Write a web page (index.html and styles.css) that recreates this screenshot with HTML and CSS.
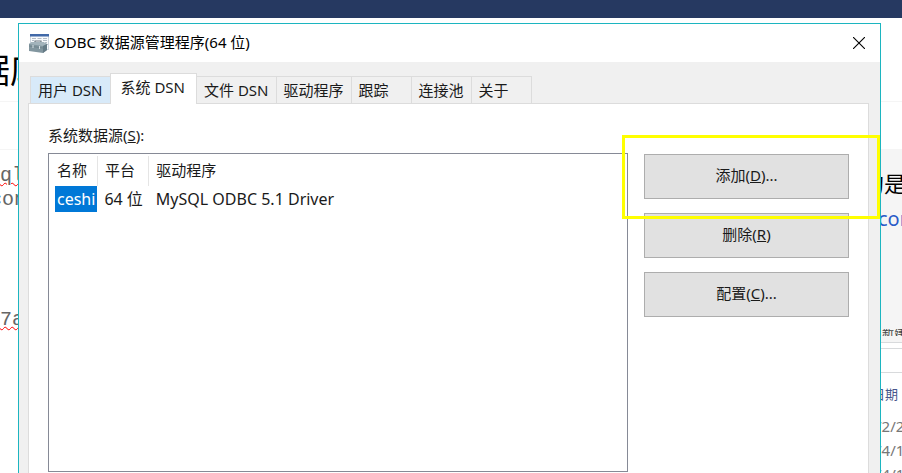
FILE: index.html
```html
<!DOCTYPE html>
<html lang="zh-CN">
<head>
    <meta charset="UTF-8">
    <meta name="viewport" content="width=device-width, initial-scale=1.0">
    <title>ODBC 数据源管理程序(64 位)</title>
    <link rel="stylesheet" href="styles.css">
</head>
<body>
    <div class="desktop">
        <div class="top-bar"></div>
        <div class="page">
            <div class="page-left">
                <h1 class="page-title">据库</h1>
                <div class="code">
                    <p class="typo">ql</p>
                    <p class="code-cut"><span class="keyword">c</span>on</p>
                    <p class="typo code-last">7a</p>
                </div>
            </div>
            <div class="page-right">
                <div class="page-head"></div>
                <div class="card">
                    <p class="card-title">的是</p>
                    <a class="card-link" href="#">com</a>
                    <p class="card-note">新建</p>
                </div>
                <div class="divider"></div>
                <div class="dates">
                    <p class="dates-head">日期</p>
                    <p>/2/2</p>
                    <p>/4/1</p>
                    <p>/4/1</p>
                </div>
            </div>
        </div>

        <div class="dialog" role="dialog" aria-labelledby="dialogTitle">
            <div class="title-bar">
                <svg class="app-icon" viewBox="0 0 20 20" aria-hidden="true">
                    <rect x="1.5" y="1.5" width="18" height="15" fill="#f8fafc" stroke="#ccd5de"/>
                    <rect x="1" y="1" width="19" height="2.5" fill="#4169a8"/>
                    <path d="M3 5.5h4M8.5 5.5h4M14 5.500h4M3 7.5h2M14 7.5h4M16 9.5h2M18 11.5h1" stroke="#b3bcc6"/>
                    <path d="M6 10V8h6v2" fill="none" stroke="#6b7780" stroke-width="1.2"/>
                    <path d="M0 11l3-2h11l4 2v6l-4 3-14-2z" fill="#82969f"/>
                    <path d="M0 11l3-2h11l4 2-4 2z" fill="#a3b4bc"/>
                    <path d="M14 13l4-2v6l-4 3z" fill="#657b86"/>
                    <path d="M0 13l14 2" stroke="#6c808a" stroke-width=".8"/>
                    <path d="M4 12v3M10.5 13v3" stroke="#d5dfe4"/>
                </svg>
                <span id="dialogTitle">ODBC 数据源管理程序(64 位)</span>
                <button type="button" class="close-btn" aria-label="关闭">
                    <svg viewBox="0 0 12 12"><path d="M0 0l12 12M12 0L0 12" stroke="#000" stroke-width="1.1"/></svg>
                </button>
            </div>

            <div class="dialog-body">
                <div class="tabs" role="tablist">
                    <button type="button" class="tab hover" role="tab">用户 DSN</button>
                    <button type="button" class="tab active" role="tab" aria-selected="true">系统 DSN</button>
                    <button type="button" class="tab" role="tab">文件 DSN</button>
                    <button type="button" class="tab" role="tab">驱动程序</button>
                    <button type="button" class="tab short" role="tab">跟踪</button>
                    <button type="button" class="tab short" role="tab">连接池</button>
                    <button type="button" class="tab short" role="tab">关于</button>
                </div>

                <div class="panel" role="tabpanel">
                    <div class="list-label" id="listLabel">系统数据源(<u>S</u>):</div>
                    <div class="panel-row">
                        <div class="list">
                            <table aria-labelledby="listLabel">
                                <thead>
                                    <tr><th>名称</th><th>平台</th><th>驱动程序</th></tr>
                                </thead>
                                <tbody>
                                    <tr><td class="selected">ceshi</td><td>64 位</td><td>MySQL ODBC 5.1 Driver</td></tr>
                                </tbody>
                            </table>
                        </div>
                        <div class="actions">
                            <button type="button" class="btn">添加(<u>D</u>)...</button>
                            <button type="button" class="btn">删除(<u>R</u>)</button>
                            <button type="button" class="btn">配置(<u>C</u>)...</button>
                            <div class="highlight"></div>
                        </div>
                    </div>
                </div>
            </div>
        </div>
    </div>
</body>
</html>
```

FILE: styles.css
```css
* {
    box-sizing: border-box;
}
body {
    margin: 0;
    font-family: "Noto Sans", "Noto Sans CJK SC", sans-serif;
    font-size: 15px;
    line-height: 22px;
    color: #1a1a1a;
    background-color: #fff;
}
p, h1 {
    margin: 0;
}
button {
    font: inherit;
    color: inherit;
}
.desktop {
    position: relative;
    height: 100vh;
    overflow: hidden;
}
.top-bar {
    height: 18px;
    background-color: #263961;
}

/* 后面的网页 */
.page {
    display: flex;
    justify-content: space-between;
    white-space: nowrap;
}
.page-left {
    width: 40px;
    overflow: hidden;
}
.page-title {
    height: 84px;
    padding-top: 32px;
    border-bottom: 1px solid #f5f5f5;
    font-size: 34px;
    font-weight: normal;
    line-height: 40px;
    text-indent: -24px;
    color: #000;
}
.code {
    margin-top: 47px;
    padding-top: 14px;
    border-top: 1px solid #f5f5f5;
    font-family: "Liberation Mono", monospace;
    font-size: 20px;
    line-height: 24px;
    color: #666;
}
.code-cut {
    text-indent: -10px;
}
.code-last {
    margin-top: 96px;
}
.typo {
    text-decoration: underline wavy #f00 1px;
}
.keyword {
    color: #2b50c8;
}
.page-right {
    width: 40px;
    overflow: hidden;
}
.page-head {
    height: 84px;
    border-bottom: 1px solid #f5f5f5;
}
.card {
    height: 194px;
    margin-top: 47px;
    padding-top: 18px;
    border-bottom: 1px solid #d8dadc;
    background-color: #f5f5f5;
}
.card-title {
    font-size: 22px;
    line-height: 32px;
    color: #000;
}
.card-link {
    display: block;
    padding-left: 16px;
    font-size: 20px;
    line-height: 40px;
    color: #2a5bc8;
    text-decoration: none;
}
.card-note {
    height: 7px;
    margin-top: 90px;
    padding-left: 20px;
    overflow: hidden;
    font-size: 12px;
    line-height: 7px;
    color: #444;
}
.divider {
    height: 25px;
    margin-top: 5px;
    border-top: 1px solid #d8dadc;
    border-bottom: 1px solid #d8dadc;
}
.dates {
    padding: 9px 0 0 14px;
    font-size: 15px;
    line-height: 24px;
    color: #777;
}
.dates-head {
    margin-bottom: 8px;
    font-size: 13px;
    text-indent: -4px;
    color: #47568c;
}

/* 对话框 */
.dialog {
    position: absolute;
    top: 23px;
    left: 18px;
    right: 21px;
    border: 1px solid #1cb5c0;
    background-color: #f0f0f0;
}
.title-bar {
    display: flex;
    align-items: center;
    gap: 5px;
    height: 38px;
    padding: 0 15px 0 10px;
    background-color: #fff;
    color: #000;
}
.title-bar span {
    padding-bottom: 2px;
}
.app-icon {
    width: 20px;
    height: 20px;
}
.close-btn {
    display: flex;
    margin-left: auto;
    padding: 0;
    border: none;
    background: none;
}
.close-btn svg {
    width: 12px;
    height: 12px;
}
.dialog-body {
    padding: 11px 11px 40px 9px;
}
.tabs {
    display: flex;
    align-items: flex-end;
    padding-left: 2px;
}
.tab {
    height: 27px;
    margin-right: -1px;
    padding: 0 7px;
    border: 1px solid #dcdcdc;
    border-bottom: none;
    background-color: #f0f0f0;
    white-space: nowrap;
}
.tab.hover {
    background-color: #d8eaf9;
}
.tab.active {
    position: relative;
    z-index: 1;
    height: 31px;
    margin-bottom: -1px;
    padding: 0 11px 4px 10px;
    background-color: #fff;
}
.tab.short {
    width: 61px;
    text-align: left;
}
.panel {
    padding: 20px 19px;
    border: 1px solid #dcdcdc;
    background-color: #fff;
}
.list-label {
    margin-bottom: 7px;
}
.panel-row {
    display: flex;
    gap: 16px;
}
.list {
    flex: 1;
    min-height: 319px;
    padding: 2px 6px;
    border: 1px solid #868a96;
}
table {
    border-collapse: collapse;
}
th, td {
    padding: 0 6px 0 7px;
    text-align: left;
    font-weight: normal;
    white-space: nowrap;
}
th {
    height: 30px;
    padding-bottom: 2px;
    border-right: 1px solid #e5e5e5;
}
th:first-child {
    padding-left: 2px;
}
th:last-child {
    border-right: none;
}
td {
    height: 26px;
    font-size: 16px;
}
.selected {
    padding: 0 2px;
    background-color: #0078d7;
    color: #fff;
}
.actions {
    position: relative;
    display: flex;
    flex-direction: column;
    gap: 14px;
    width: 205px;
    padding-top: 1px;
}
.btn {
    height: 45px;
    padding-bottom: 4px;
    border: 1px solid #adadad;
    background-color: #e1e1e1;
}
.highlight {
    position: absolute;
    top: -18px;
    left: -22px;
    right: -31px;
    height: 84px;
    border: 3px solid #ff0;
}
```
